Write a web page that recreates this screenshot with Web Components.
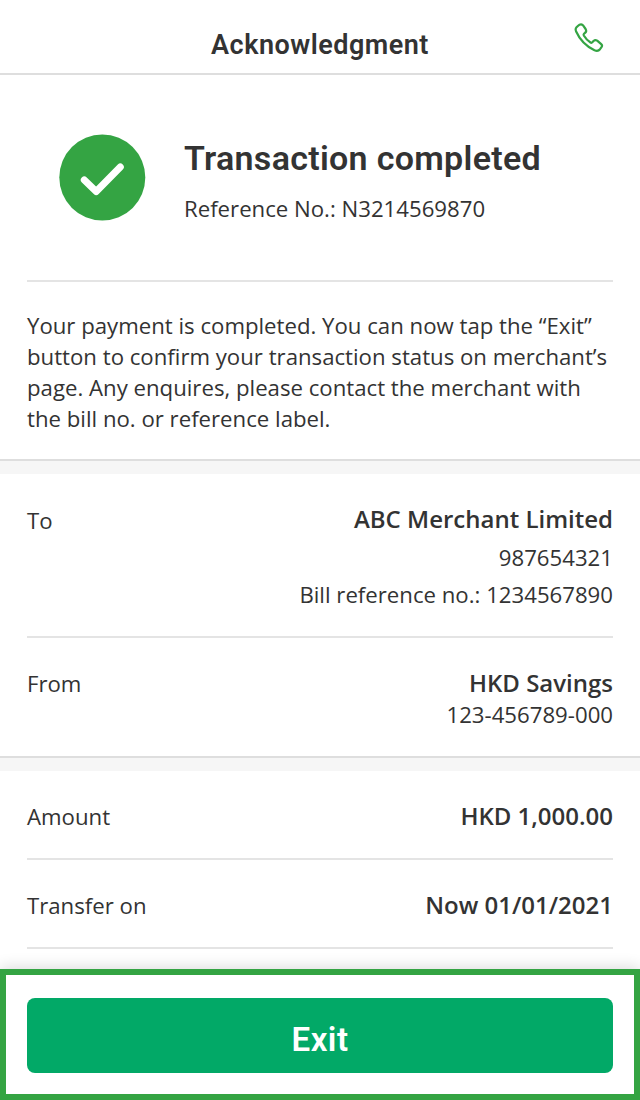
<!DOCTYPE html>
<html lang="en">
<head>
<meta charset="UTF-8">
<meta name="viewport" content="width=device-width, initial-scale=1.0">
<title>Acknowledgment</title>
<style>
  body {
    margin: 0;
    background: #fff;
    color: #333;
    font-family: "Open Sans", "Noto Sans", sans-serif;
    font-size: 22.2px;
    --heading: Roboto, "Liberation Sans", sans-serif;
    --line: #e4e4e4;
    --green: #34a443;
  }
</style>
</head>
<body>
<ack-page>
  <ack-header slot="header">Acknowledgment</ack-header>
  <ack-status>
    Transaction completed
    <span slot="reference">Reference No.: N3214569870</span>
  </ack-status>
  <ack-note>Your payment is completed. You can now tap the “Exit” button to confirm your transaction status on merchant’s page. Any enquires, please contact the merchant with the bill no. or reference label.</ack-note>
  <ack-band></ack-band>
  <ack-row label="To" style="--height: 164px; --top: 26px; --title-line: 38px; --line-height: 37px; --label-shift: 2px; --gap: 1px">
    ABC Merchant Limited
    <span slot="detail">987654321</span>
    <span slot="detail">Bill reference no.: 1234567890</span>
  </ack-row>
  <ack-row label="From" last style="--height: 118px; --top: 29px; --title-line: 32px; --line-height: 31px">
    HKD Savings
    <span slot="detail">123-456789-000</span>
  </ack-row>
  <ack-band></ack-band>
  <ack-row label="Amount" style="--height: 89px; --top: 29px; --title-line: 32px">HKD 1,000.00</ack-row>
  <ack-row label="Transfer on" style="--height: 89px; --top: 29px; --title-line: 32px">Now 01/01/2021</ack-row>
  <ack-footer slot="footer">Exit</ack-footer>
</ack-page>

<script>
class AckPage extends HTMLElement {
  connectedCallback() {
    this.attachShadow({ mode: 'open' });
    this.shadowRoot.innerHTML = `
      <style>
        :host {
          display: flex;
          flex-direction: column;
          height: 1100px;
          overflow: hidden;
        }
        main {
          flex: 1;
          min-height: 0;
        }
      </style>
      <slot name="header"></slot>
      <main><slot></slot></main>
      <slot name="footer"></slot>
    `;
  }
}

class AckHeader extends HTMLElement {
  connectedCallback() {
    this.attachShadow({ mode: 'open' });
    this.shadowRoot.innerHTML = `
      <style>
        :host {
          display: grid;
          grid-template-columns: 1fr auto 1fr;
          height: 75px;
          box-sizing: border-box;
          border-bottom: 2px solid #dedede;
        }
        h1 {
          grid-column: 2;
          margin: 0;
          padding-top: 29px;
          font: 600 27px/32px var(--heading);
          letter-spacing: 0.5px;
        }
        svg {
          justify-self: end;
          margin: 22px 35px 0 0;
        }
      </style>
      <h1><slot></slot></h1>
      <svg width="32" height="32" viewBox="0 0 32 32" fill="none" stroke="#34a443" stroke-width="2.2" stroke-linejoin="round">
        <path d="M5 3.8 L6.6 2.7 Q8.3 1.7 9.9 3.2 L12.6 7 Q13.9 9.1 12.3 10.6 L11 11.8 Q10.3 12.5 10.8 13.5 Q13.5 18 17.5 20.5 Q18.6 21.2 19.5 20.1 L20.8 18.7 Q22.2 17.4 24.2 18.7 L28.2 22.2 Q29.7 23.5 28.5 25.2 L27 27.2 Q25 29.7 21.5 28.2 C13 24.2 6.5 17 3 9.2 Q1.7 6 5 3.8 Z"/>
      </svg>
    `;
  }
}

class AckStatus extends HTMLElement {
  connectedCallback() {
    this.attachShadow({ mode: 'open' });
    this.shadowRoot.innerHTML = `
      <style>
        :host {
          display: flex;
          gap: 38px;
          height: 207px;
          box-sizing: border-box;
          margin: 0 27px;
          padding: 59px 0 0 32px;
          border-bottom: 2px solid var(--line);
        }
        h2 {
          margin: 4px 0 11px;
          font: 600 34px/40px var(--heading);
          letter-spacing: 0.3px;
        }
        p {
          margin: 0;
          line-height: 40px;
        }
      </style>
      <svg width="87" height="87" viewBox="0 0 87 87">
        <circle cx="43.3" cy="43.5" r="43" fill="#34a443"/>
        <path d="M25.3 46 L37.2 57.5 L61.3 33" fill="none" stroke="#fff" stroke-width="7" stroke-linecap="round" stroke-linejoin="round"/>
      </svg>
      <div>
        <h2><slot></slot></h2>
        <p><slot name="reference"></slot></p>
      </div>
    `;
  }
}

class AckNote extends HTMLElement {
  connectedCallback() {
    this.attachShadow({ mode: 'open' });
    this.shadowRoot.innerHTML = `
      <style>
        :host {
          display: block;
          padding: 28px 27px 25px;
          line-height: 31px;
        }
      </style>
      <slot></slot>
    `;
  }
}

class AckBand extends HTMLElement {
  connectedCallback() {
    this.attachShadow({ mode: 'open' });
    this.shadowRoot.innerHTML = `
      <style>
        :host {
          display: block;
          height: 13px;
          border-top: 2px solid #dedede;
          background: #f6f6f6;
        }
      </style>
    `;
  }
}

class AckRow extends HTMLElement {
  connectedCallback() {
    this.attachShadow({ mode: 'open' });
    this.shadowRoot.innerHTML = `
      <style>
        :host {
          display: flex;
          justify-content: space-between;
          height: var(--height);
          box-sizing: border-box;
          margin: 0 27px;
          padding-top: var(--top);
          border-bottom: 2px solid var(--line);
        }
        :host([last]) {
          border-bottom: none;
        }
        .label {
          line-height: var(--title-line);
          padding-top: var(--label-shift, 1px);
        }
        .value {
          display: flex;
          flex-direction: column;
          align-items: flex-end;
        }
        .title {
          font-size: 24px;
          font-weight: 600;
          line-height: var(--title-line);
          margin-bottom: var(--gap, 0);
        }
        ::slotted(span) {
          line-height: var(--line-height);
        }
      </style>
      <div class="label">${this.getAttribute('label')}</div>
      <div class="value">
        <div class="title"><slot></slot></div>
        <slot name="detail"></slot>
      </div>
    `;
  }
}

class AckFooter extends HTMLElement {
  connectedCallback() {
    this.attachShadow({ mode: 'open' });
    this.shadowRoot.innerHTML = `
      <style>
        :host {
          display: block;
          height: 131px;
          box-sizing: border-box;
          border: 6px solid var(--green);
          padding: 22.5px 21px 0;
          background: #fff;
          box-shadow: 0 -2px 14px rgba(0, 0, 0, 0.14);
          position: relative;
        }
        button {
          display: block;
          width: 100%;
          height: 75.5px;
          border: none;
          border-radius: 8px;
          padding: 9px 0 0;
          background: #02a967;
          color: #fff;
          font: 600 33px/40px var(--heading);
          letter-spacing: 0.5px;
        }
      </style>
      <button><slot></slot></button>
    `;
  }
}

customElements.define('ack-page', AckPage);
customElements.define('ack-header', AckHeader);
customElements.define('ack-status', AckStatus);
customElements.define('ack-note', AckNote);
customElements.define('ack-band', AckBand);
customElements.define('ack-row', AckRow);
customElements.define('ack-footer', AckFooter);
</script>
</body>
</html>
